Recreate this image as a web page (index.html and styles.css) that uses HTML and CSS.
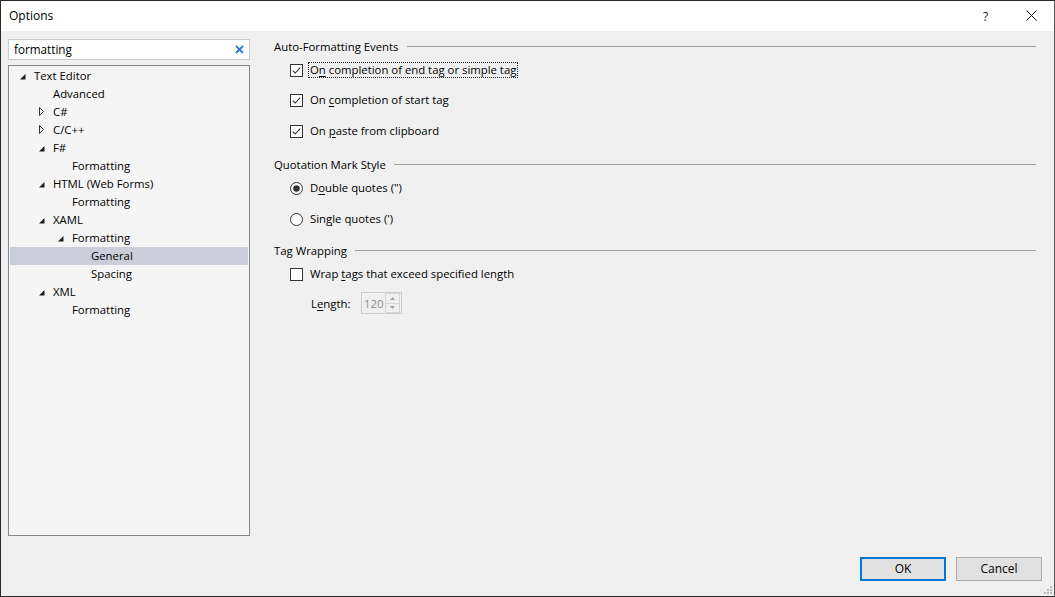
FILE: index.html
```html
<!DOCTYPE html>
<html>
<head>
<meta charset="utf-8">
<link rel="stylesheet" href="styles.css">
</head>
<body>
<div class="window">
  <div class="titlebar">
    <span class="title">Options</span>
    <span class="help">?</span>
    <span class="close"><svg width="11" height="11" viewBox="0 0 11 11"><path d="M0.5 0.5 L10.5 10.5 M10.5 0.5 L0.5 10.5" stroke="#111" stroke-width="1" fill="none"/></svg></span>
  </div>
  <div class="body">
    <div class="content">
      <div class="left">
        <div class="search">
          <span class="search-text">formatting</span>
          <svg class="clear" width="9" height="9" viewBox="0 0 9 9"><path d="M1 1 L8 8 M8 1 L1 8" stroke="#2b7bd6" stroke-width="1.8" fill="none"/></svg>
        </div>
        <div class="tree">
          <div class="row l0"><span class="arrow"><svg width="7" height="7" viewBox="0 0 7 7"><polygon points="6.5,1 6.5,6.5 1,6.5" fill="#1e1e1e"/></svg></span><span class="txt">Text Editor</span></div>
          <div class="row l1"><span class="arrow"></span><span class="txt">Advanced</span></div>
          <div class="row l1 shift"><span class="arrow"><svg width="6" height="9" viewBox="0 0 6 9"><polygon points="0.5,0.5 4.5,4.5 0.5,8.5" fill="none" stroke="#333"/></svg></span><span class="txt">C#</span></div>
          <div class="row l1 shift"><span class="arrow"><svg width="6" height="9" viewBox="0 0 6 9"><polygon points="0.5,0.5 4.5,4.5 0.5,8.5" fill="none" stroke="#333"/></svg></span><span class="txt">C/C++</span></div>
          <div class="row l1"><span class="arrow"><svg width="7" height="7" viewBox="0 0 7 7"><polygon points="6.5,1 6.5,6.5 1,6.5" fill="#1e1e1e"/></svg></span><span class="txt">F#</span></div>
          <div class="row l2"><span class="arrow"></span><span class="txt">Formatting</span></div>
          <div class="row l1"><span class="arrow"><svg width="7" height="7" viewBox="0 0 7 7"><polygon points="6.5,1 6.5,6.5 1,6.5" fill="#1e1e1e"/></svg></span><span class="txt">HTML (Web Forms)</span></div>
          <div class="row l2"><span class="arrow"></span><span class="txt">Formatting</span></div>
          <div class="row l1"><span class="arrow"><svg width="7" height="7" viewBox="0 0 7 7"><polygon points="6.5,1 6.5,6.5 1,6.5" fill="#1e1e1e"/></svg></span><span class="txt">XAML</span></div>
          <div class="row l2"><span class="arrow"><svg width="7" height="7" viewBox="0 0 7 7"><polygon points="6.5,1 6.5,6.5 1,6.5" fill="#1e1e1e"/></svg></span><span class="txt">Formatting</span></div>
          <div class="row l3 selected"><span class="arrow"></span><span class="txt">General</span></div>
          <div class="row l3"><span class="arrow"></span><span class="txt">Spacing</span></div>
          <div class="row l1"><span class="arrow"><svg width="7" height="7" viewBox="0 0 7 7"><polygon points="6.5,1 6.5,6.5 1,6.5" fill="#1e1e1e"/></svg></span><span class="txt">XML</span></div>
          <div class="row l2"><span class="arrow"></span><span class="txt">Formatting</span></div>
        </div>
      </div>
      <div class="right">
        <div class="group">
          <div class="group-header"><span>Auto-Formatting Events</span><span class="rule"></span></div>
          <div class="option"><svg class="box" width="13" height="13" viewBox="0 0 13 13"><rect x="0.5" y="0.5" width="12" height="12" fill="#fff" stroke="#333"/><path d="M2.8 6.6 L5.2 9 L10.2 3.6" fill="none" stroke="#333" stroke-width="1.1"/></svg><span class="label focus">O<u>n</u> completion of end tag or simple tag</span></div>
          <div class="option"><svg class="box" width="13" height="13" viewBox="0 0 13 13"><rect x="0.5" y="0.5" width="12" height="12" fill="#fff" stroke="#333"/><path d="M2.8 6.6 L5.2 9 L10.2 3.6" fill="none" stroke="#333" stroke-width="1.1"/></svg><span class="label">On <u>c</u>ompletion of start tag</span></div>
          <div class="option o3"><svg class="box" width="13" height="13" viewBox="0 0 13 13"><rect x="0.5" y="0.5" width="12" height="12" fill="#fff" stroke="#333"/><path d="M2.8 6.6 L5.2 9 L10.2 3.6" fill="none" stroke="#333" stroke-width="1.1"/></svg><span class="label">On <u>p</u>aste from clipboard</span></div>
        </div>
        <div class="group g2">
          <div class="group-header"><span>Quotation Mark Style</span><span class="rule"></span></div>
          <div class="option"><svg class="box" width="13" height="13" viewBox="0 0 13 13"><circle cx="6.5" cy="6.5" r="6" fill="#fff" stroke="#333"/><circle cx="6.5" cy="6.5" r="3.3" fill="#333"/></svg><span class="label">D<u>o</u>uble quotes (")</span></div>
          <div class="option o3"><svg class="box" width="13" height="13" viewBox="0 0 13 13"><circle cx="6.5" cy="6.5" r="6" fill="#fff" stroke="#333"/></svg><span class="label">Sin<u>g</u>le quotes (')</span></div>
        </div>
        <div class="group g3">
          <div class="group-header"><span>Tag Wrapping</span><span class="rule"></span></div>
          <div class="option"><svg class="box" width="13" height="13" viewBox="0 0 13 13"><rect x="0.5" y="0.5" width="12" height="12" fill="#fff" stroke="#333"/></svg><span class="label">Wrap <u>t</u>ags that exceed specified length</span></div>
          <div class="length-row">
            <span class="length-label">L<u>e</u>ngth:</span>
            <div class="spinner">
              <span class="spin-value">120</span>
              <div class="spin-buttons">
                <span class="spin-btn"><svg width="5" height="3" viewBox="0 0 5 3"><polygon points="2.5,0 5,3 0,3" fill="#a0a0a0"/></svg></span>
                <span class="spin-btn"><svg width="5" height="3" viewBox="0 0 5 3"><polygon points="0,0 5,0 2.5,3" fill="#a0a0a0"/></svg></span>
              </div>
            </div>
          </div>
        </div>
      </div>
    </div>
    <div class="footer">
      <button class="btn ok">OK</button>
      <button class="btn">Cancel</button>
      <svg class="grip" width="10" height="10" viewBox="0 0 10 10">
        <rect x="7" y="1" width="2" height="2" fill="#b8b8b8"/>
        <rect x="4" y="4" width="2" height="2" fill="#b8b8b8"/>
        <rect x="7" y="4" width="2" height="2" fill="#b8b8b8"/>
        <rect x="1" y="7" width="2" height="2" fill="#b8b8b8"/>
        <rect x="4" y="7" width="2" height="2" fill="#b8b8b8"/>
        <rect x="7" y="7" width="2" height="2" fill="#b8b8b8"/>
      </svg>
    </div>
  </div>
</div>
</body>
</html>
```

FILE: styles.css
```css
* { box-sizing: border-box; }
html, body { margin: 0; padding: 0; }
body {
  font-family: "Segoe UI", "Open Sans", "Noto Sans", sans-serif;
  font-size: 11.35px;
  color: #000;
  background: #2b2b2b;
}
.window {
  width: 1055px;
  height: 597px;
  border: 1px solid #2b2b2b;
  border-right-color: #555;
  display: flex;
  flex-direction: column;
  background: #f0f0f0;
}
.titlebar {
  height: 30px;
  background: #fff;
  display: flex;
  align-items: center;
  padding-left: 8px;
  font-size: 12px;
}
.title { flex: 1; color: #000; padding-bottom: 1px; }
.help { width: 14px; margin-right: 29px; font-size: 12px; color: #111; }
.close { width: 11px; height: 11px; margin-right: 17px; display: flex; margin-top: -1px; }
.body {
  flex: 1;
  display: flex;
  flex-direction: column;
  padding: 8px 12px 15px 7px;
  position: relative;
}
.content { flex: 1; display: flex; gap: 24px; min-height: 0; }
.left { width: 242px; display: flex; flex-direction: column; gap: 5px; }
.search {
  height: 21px;
  background: #fff;
  border: 1px solid #c8c9d3;
  display: flex;
  align-items: center;
  padding-left: 5px;
  padding-right: 4px;
}
.search-text { flex: 1; font-size: 11.7px; padding-bottom: 1px; }
.clear { margin-right: 1px; }
.tree {
  flex: 1;
  background: #f5f5f5;
  border: 1px solid #828790;
  padding: 1px 1px;
}
.row {
  height: 18px;
  display: flex;
  align-items: center;
  white-space: nowrap;
}
.row .txt { padding-bottom: 2px; }
.row .arrow { width: 15px; height: 18px; display: flex; align-items: center; }
.row.l0 { padding-left: 9px; }
.row.l1 { padding-left: 28px; }
.row.l2 { padding-left: 47px; }
.row.l3 { padding-left: 66px; }
.row.shift .arrow svg { margin-left: 1px; margin-top: -1px; }
.row.selected { background: #cbcdd9; }
.right { flex: 1; padding-right: 6px; }
.group-header {
  height: 16px;
  line-height: 16px;
  display: flex;
  align-items: center;
  white-space: nowrap;
}
.group-header .rule {
  flex: 1;
  height: 1px;
  background: #a0a0a0;
  margin-left: 8px;
  margin-top: -1px;
}
.g2 { margin-top: 11px; }
.g3 { margin-top: 9px; }
.option {
  height: 30px;
  display: flex;
  align-items: center;
  padding-left: 16px;
  white-space: nowrap;
}
.option.o3 { height: 31px; padding-top: 1px; }
.option .box { flex: none; margin-right: 6px; }
.label { padding: 0 1px; line-height: 14px; }
.label.focus { outline: 1px dotted #222; outline-offset: 0; }
u { text-decoration-thickness: 1px; text-underline-offset: 2px; }
.length-row {
  display: flex;
  align-items: center;
  margin-top: 3px;
  padding-left: 37px;
}
.length-label { width: 50px; }
.spinner {
  width: 41px;
  height: 22px;
  border: 1px solid #cccccc;
  display: flex;
  align-items: center;
  padding-left: 2px;
  background: #f0f0f0;
}
.spin-value { flex: 1; color: #8a8a8a; }
.spin-buttons {
  width: 15px;
  height: 20px;
  display: flex;
  flex-direction: column;
  margin-right: 1px;
}
.spin-btn {
  flex: 1;
  border: 1px solid #d6d6d6;
  display: flex;
  align-items: center;
  justify-content: center;
}
.spin-btn + .spin-btn { border-top: none; }
.footer {
  height: 24px;
  margin-top: 21px;
  display: flex;
  justify-content: flex-end;
  gap: 10px;
}
.btn {
  width: 86px;
  height: 24px;
  font-family: inherit;
  font-size: 12px;
  background: #e1e1e1;
  border: 1px solid #adadad;
  color: #000;
  padding: 0 0 1px;
}
.btn.ok { border: 2px solid #0078d7; }
.grip { position: absolute; right: 1px; bottom: 1px; }
```
